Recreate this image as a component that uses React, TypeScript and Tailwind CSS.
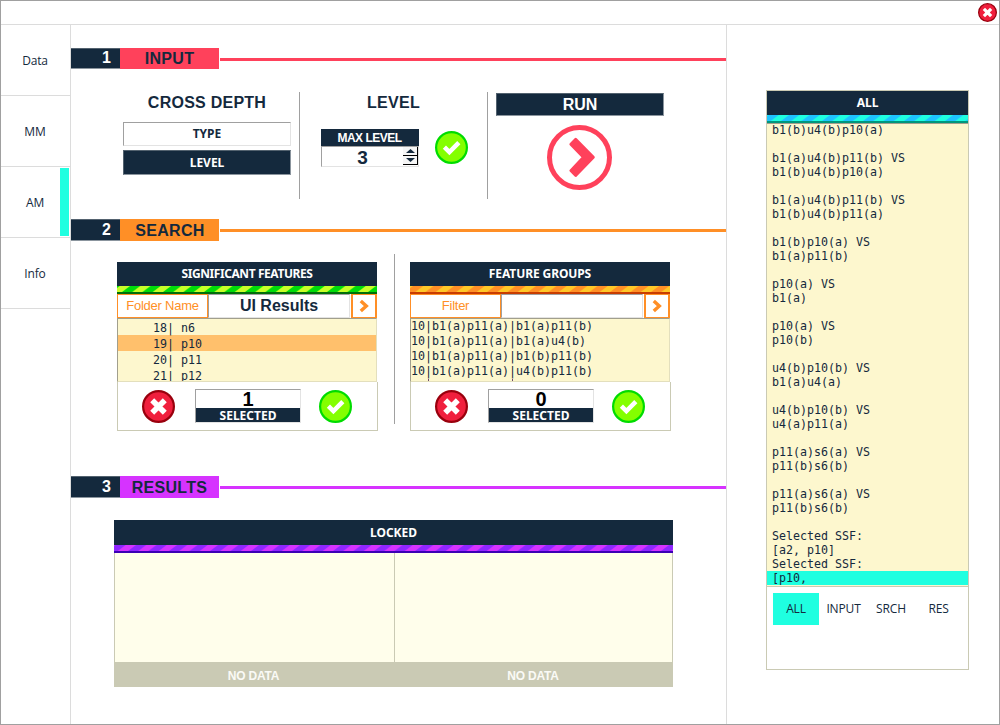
import { useId, type ReactNode } from "react";

const LOG = [
  "b1(b)u4(b)p10(a)", "",
  "b1(a)u4(b)p11(b) VS", "b1(b)u4(b)p10(a)", "",
  "b1(a)u4(b)p11(b) VS", "b1(b)u4(b)p11(a)", "",
  "b1(b)p10(a) VS", "b1(a)p11(b)", "",
  "p10(a) VS", "b1(a)", "",
  "p10(a) VS", "p10(b)", "",
  "u4(b)p10(b) VS", "b1(a)u4(a)", "",
  "u4(b)p10(b) VS", "u4(a)p11(a)", "",
  "p11(a)s6(a) VS", "p11(b)s6(b)", "",
  "p11(a)s6(a) VS", "p11(b)s6(b)", "",
  "Selected SSF:", "[a2, p10]", "Selected SSF:", "[p10,",
];

const FEATURES = ["18| n6", "19| p10", "20| p11", "21| p12"];

const GROUPS = [
  "10|b1(a)p11(a)|b1(a)p11(b)",
  "10|b1(a)p11(a)|b1(a)u4(b)",
  "10|b1(a)p11(a)|b1(b)p11(b)",
  "10|b1(a)p11(a)|u4(b)p11(b)",
];

const MONO = "font-['DejaVu_Sans_Mono',monospace] text-[11.63px] whitespace-pre";
const UI = "font-['Open_Sans','Noto_Sans',sans-serif] tracking-[-0.15px]";
const UI_BOLD = "font-['Noto_Sans','Open_Sans',sans-serif] font-bold";

function Stripes({ a, b, base, offset = 0 }: { a: string; b: string; base: string; offset?: number }) {
  const id = useId();
  return (
    <svg className="block h-2 w-full shrink-0" aria-hidden="true">
      <defs>
        <pattern id={id} width="20.5" height="6" patternUnits="userSpaceOnUse" x={offset}>
          <rect width="20.5" height="6" fill={a} />
          <path d="M0 6 L8 0 H18.25 L10.25 6 Z" fill={b} />
        </pattern>
      </defs>
      <rect width="100%" height="6" fill={`url(#${id})`} />
      <rect y="6" width="100%" height="2" fill={base} />
    </svg>
  );
}

function CrossIcon({ size }: { size: number }) {
  return (
    <svg width={size} height={size} viewBox="0 0 33 33" className="block shrink-0">
      <circle cx="16.5" cy="16.5" r="15.4" fill="#f01f3d" stroke="#99000d" strokeWidth="2.2" />
      <path d="M10.2 10.2 L22.8 22.8 M22.8 10.2 L10.2 22.8" stroke="#fff" strokeWidth="5.6" fill="none" />
    </svg>
  );
}

function CheckIcon() {
  return (
    <svg width="33" height="33" viewBox="0 0 33 33" className="block shrink-0">
      <circle cx="16.5" cy="16.5" r="15.4" fill="#84ff00" stroke="#00dc00" strokeWidth="2.2" />
      <path d="M9.4 16.1 L14.4 21 L23.8 11.7" stroke="#fff" strokeWidth="4.5" fill="none" />
    </svg>
  );
}

function SectionHead({ n, title, bg, line, tall, pad }: { n: string; title: string; bg: string; line: string; tall?: boolean; pad?: string }) {
  return (
    <div className={`flex w-full shrink-0 ${tall ? "h-[22px]" : "h-[21px]"} text-[16px] font-bold text-[#14293d]`}>
      <div className={`w-[49px] border-y border-t-[#53626f] border-b-[#8b959e] bg-[#14293d] pr-[9px] text-right text-white ${tall ? "leading-[20px]" : "leading-[18px]"}`}>{n}</div>
      <div className={`w-[99px] text-center tracking-[0.3px] ${tall ? "leading-[24px]" : "leading-[22px]"} ${bg} ${pad ?? ""}`}>{title}</div>
      <div className={`mt-[10px] ml-px h-[3px] flex-1 ${line}`} />
    </div>
  );
}

function Selected({ n }: { n: string }) {
  return (
    <div className="ml-[2px] flex h-[34px] w-[106px] flex-col border border-t-[#a0a0a0] border-r-[#e3e3e3] border-b-[#e3e3e3] border-l-[#a0a0a0] bg-white text-center">
      <div className="h-[18px] text-[20px] leading-[18px] font-bold text-black">{n}</div>
      <div className={`h-[14px] bg-[#14293d] text-[12px] leading-[15px] text-white ${UI_BOLD}`}>SELECTED</div>
    </div>
  );
}

function FeaturePanel({ title, titleClass, label, value, n, stripes, children }: { title: string; titleClass: string; label: string; value: string; n: string; stripes: ReactNode; children: ReactNode }) {
  return (
    <div className="flex h-[169px] w-[261px] shrink-0 flex-col">
      <div className="mr-px flex h-[120px] flex-col">
        <div className={`h-[24px] shrink-0 bg-[#14293d] text-center text-[12px] leading-[23px] text-white ${titleClass} ${UI_BOLD}`}>{title}</div>
        {stripes}
        <div className="flex h-[24px] shrink-0">
          <div className="w-[91px] border border-[#ff8f26] text-center text-[13px] leading-[22px] tracking-[-0.25px] text-[#ff8f26]">{label}</div>
          <div className="mr-px w-[142px] border border-t-[#a0a0a0] border-r-[#e3e3e3] border-b-[#e3e3e3] border-l-[#a0a0a0] text-center text-[16px] leading-[21px] font-bold text-[#14293d]">{value}</div>
          <div className="flex w-[26px] items-center justify-center border-2 border-t border-b border-[#ff8f26]">
            <svg width="12" height="14" viewBox="0 0 12 14">
              <path d="M2.8 2 L8.3 7 L2.8 12" fill="none" stroke="#ff8f26" strokeWidth="3.4" />
            </svg>
          </div>
        </div>
        <div className={`h-[64px] shrink-0 overflow-hidden border border-t-[#a19f8d] border-r-[#e3dfbd] border-b-[#e3dfbd] border-l-[#a19f8d] bg-[#fdf7ce] text-[#14293d] ${MONO}`}>{children}</div>
      </div>
      <div className="flex h-[49px] items-center justify-between border border-t-0 border-[#cacab4] pr-[25px] pl-[24px]">
        <CrossIcon size={33} />
        <Selected n={n} />
        <CheckIcon />
      </div>
    </div>
  );
}

export default function App() {
  const nav = ["Data", "MM", "AM", "Info"];
  return (
    <div className="flex h-[725px] w-[1000px] flex-col overflow-hidden border border-[#a0a0a0] bg-white font-['Liberation_Sans',Arial,sans-serif] text-[#14293d]">
      <header className="flex h-[24px] shrink-0 justify-end border-b border-[#dcdcdc] pt-[2px] pr-[2px]">
        <CrossIcon size={19} />
      </header>

      <div className="flex min-h-0 flex-1">
        <nav className="w-[70px] shrink-0 border-r border-[#dcdcdc]">
          {nav.map((item) => (
            <div key={item} className={`flex h-[71px] border-b border-[#dcdcdc] text-[12px] ${UI}`}>
              <div className="flex w-[59px] shrink-0 items-center justify-center pt-[2px] pl-[9px]">{item}</div>
              {item === "AM" && <div className="mt-px h-[68px] w-[9px] bg-[#1fffe0]" />}
            </div>
          ))}
        </nav>

        <main className="flex w-[655px] shrink-0 flex-col pt-[23px]">
          <SectionHead n="1" title="INPUT" bg="bg-[#ff415b]" line="bg-[#ff415b]" />
          <div className="flex h-[150px] shrink-0 pt-[23px]">
            <div className="flex h-[107px] w-[229px] flex-col border-r border-[#a0a0a0] pl-[52px]">
              <h2 className="w-[168px] text-center text-[16px] leading-[22px] font-bold tracking-[0.25px]">CROSS DEPTH</h2>
              <div className={`mt-[8px] h-[24px] w-[168px] border border-t-[#a0a0a0] border-r-[#e3e3e3] border-b-[#e3e3e3] border-l-[#a0a0a0] text-center text-[12px] leading-[22px] ${UI_BOLD}`}>TYPE</div>
              <div className={`mt-[4px] h-[25px] w-[168px] border border-t-[#53626f] border-r-[#8b959e] border-b-[#8b959e] border-l-[#53626f] bg-[#14293d] text-center text-[12px] leading-[23px] text-white ${UI_BOLD}`}>LEVEL</div>
            </div>
            <div className="flex h-[107px] w-[188px] flex-col border-r border-[#a0a0a0]">
              <h2 className="text-center text-[16px] leading-[22px] font-bold tracking-[0.25px]">LEVEL</h2>
              <div className="mt-[15px] flex pl-[21px]">
                <div className="w-[98px]">
                  <div className="h-[17px] bg-[#14293d] pr-px text-center text-[12px] leading-[18px] font-bold tracking-[-0.5px] text-white">MAX LEVEL</div>
                  <div className="flex h-[21px] border border-t-[#a0a0a0] border-r-[#e3e3e3] border-b-[#e3e3e3] border-l-[#a0a0a0]">
                    <div className="flex-1 text-center text-[19px] leading-[21px] font-bold">3</div>
                    <div className="flex w-[15px] flex-col">
                      <div className="flex h-[9px] items-center justify-center border-r border-b border-black bg-[#f6f6f6]">
                        <svg width="9" height="4"><path d="M4.5 0 L9 4 H0 Z" fill="#14293d" /></svg>
                      </div>
                      <div className="flex h-[9px] items-center justify-center border-r border-b border-black bg-[#f6f6f6]">
                        <svg width="9" height="4"><path d="M0 0 H9 L4.5 4 Z" fill="#14293d" /></svg>
                      </div>
                    </div>
                  </div>
                </div>
                <div className="mt-[2px] ml-[16px]"><CheckIcon /></div>
              </div>
            </div>
            <div className="flex flex-col items-center pt-[1px] pl-[8px]">
              <div className="h-[23px] w-[168px] border border-t-[#53626f] border-r-[#8b959e] border-b-[#8b959e] border-l-[#53626f] bg-[#14293d] text-center text-[16px] leading-[21px] font-bold text-white">RUN</div>
              <svg width="65" height="65" viewBox="0 0 65 65" className="mt-[9px] mr-[1px] block">
                <circle cx="32.5" cy="32.5" r="30" fill="none" stroke="#ff415b" strokeWidth="5" />
                <path d="M28.7 14.2 L46.4 32.3 L28.7 50.4 L23.8 45.6 L36.4 32.3 L23.8 19.2 Z" fill="#ff415b" stroke="#ff415b" strokeWidth="2.8" strokeLinejoin="round" />
              </svg>
            </div>
          </div>

          <SectionHead n="2" title="SEARCH" bg="bg-[#ff8f26]" line="bg-[#ff8f26]" tall pad="pl-px" />
          <div className="flex h-[235px] shrink-0 pt-[21px] pl-[46px]">
            <FeaturePanel title="SIGNIFICANT FEATURES" titleClass="tracking-[-0.42px]" label="Folder Name" value="UI Results" n="1" stripes={<Stripes a="#c8ff28" b="#00dc0a" base="#006e0a" offset={5} />}>
              {FEATURES.map((f) => (
                <div key={f} className={`h-[16px] pl-[35px] leading-[18px] ${f.startsWith("19") ? "bg-[#ffc06c]" : ""}`}>{f}</div>
              ))}
            </FeaturePanel>
            <div className="mr-[15px] ml-[16px] -mt-[8px] h-[170px] w-px bg-[#a0a0a0]" />
            <FeaturePanel title="FEATURE GROUPS" titleClass="tracking-[-0.1px]" label="Filter" value="" n="0" stripes={<Stripes a="#ffc828" b="#ff8f26" base="#c83c00" offset={15.5} />}>
              {GROUPS.map((g) => (
                <div key={g} className="h-[15px] leading-[15px]">{g}</div>
              ))}
              <div className="flex h-[2px] gap-[83px] pl-[17px]">
                <i className="w-px bg-[#6b4a6d]" />
                <i className="w-px bg-[#6b4a6d]" />
              </div>
            </FeaturePanel>
          </div>

          <SectionHead n="3" title="RESULTS" bg="bg-[#d633ff]" line="bg-[#d633ff]" tall />
          <div className="mt-[22px] ml-[43px] flex h-[167px] w-[559px] shrink-0 flex-col">
            <div className={`h-[25px] shrink-0 bg-[#14293d] text-center text-[12px] leading-[25px] text-white ${UI_BOLD}`}>LOCKED</div>
            <Stripes a="#d633ff" b="#8f26ff" base="#3c00b4" offset={14} />
            <div className="flex h-[109px] shrink-0 border-x border-[#cacab4] bg-[#fffeeb]">
              <div className="w-[280px] border-r border-[#cacab4]" />
            </div>
            <div className="flex h-[25px] shrink-0 bg-[#cacab4] text-center text-[12px] leading-[28px] font-bold tracking-[-0.2px] text-[#fafaf6]">
              <div className="w-[279px]">NO DATA</div>
              <div className="flex-1">NO DATA</div>
            </div>
          </div>
        </main>

        <aside className="flex-1 border-l border-[#dcdcdc] pt-[65px] pl-[39px]">
          <div className="flex h-[580px] w-[203px] flex-col border border-[#cacab4]">
            <div className={`h-[24px] shrink-0 bg-[#14293d] text-center text-[12px] leading-[24px] text-white ${UI_BOLD}`}>ALL</div>
            <Stripes a="#1fffe0" b="#1ec3ff" base="#00967d" offset={14} />
            <div className={`shrink-0 border-t border-b border-t-[#a19f8d] border-b-[#cacab4] bg-[#fdf7ce] ${MONO}`}>
              <div className="-mt-px pb-px">
                {LOG.map((l, i) => (
                  <div key={i} className={`h-[14px] pl-[5px] leading-[14px] ${i === LOG.length - 1 ? "bg-[#1fffe0]" : ""}`}>{l}</div>
                ))}
              </div>
            </div>
            <div className={`mt-[6px] flex gap-[1.5px] pl-[6px] text-center text-[12px] leading-[32px] ${UI}`}>
              <div className="h-[32px] w-[46px] bg-[#1fffe0]">ALL</div>
              <div className="w-[46px]">INPUT</div>
              <div className="w-[46px]">SRCH</div>
              <div className="w-[46px]">RES</div>
            </div>
          </div>
        </aside>
      </div>
    </div>
  );
}
